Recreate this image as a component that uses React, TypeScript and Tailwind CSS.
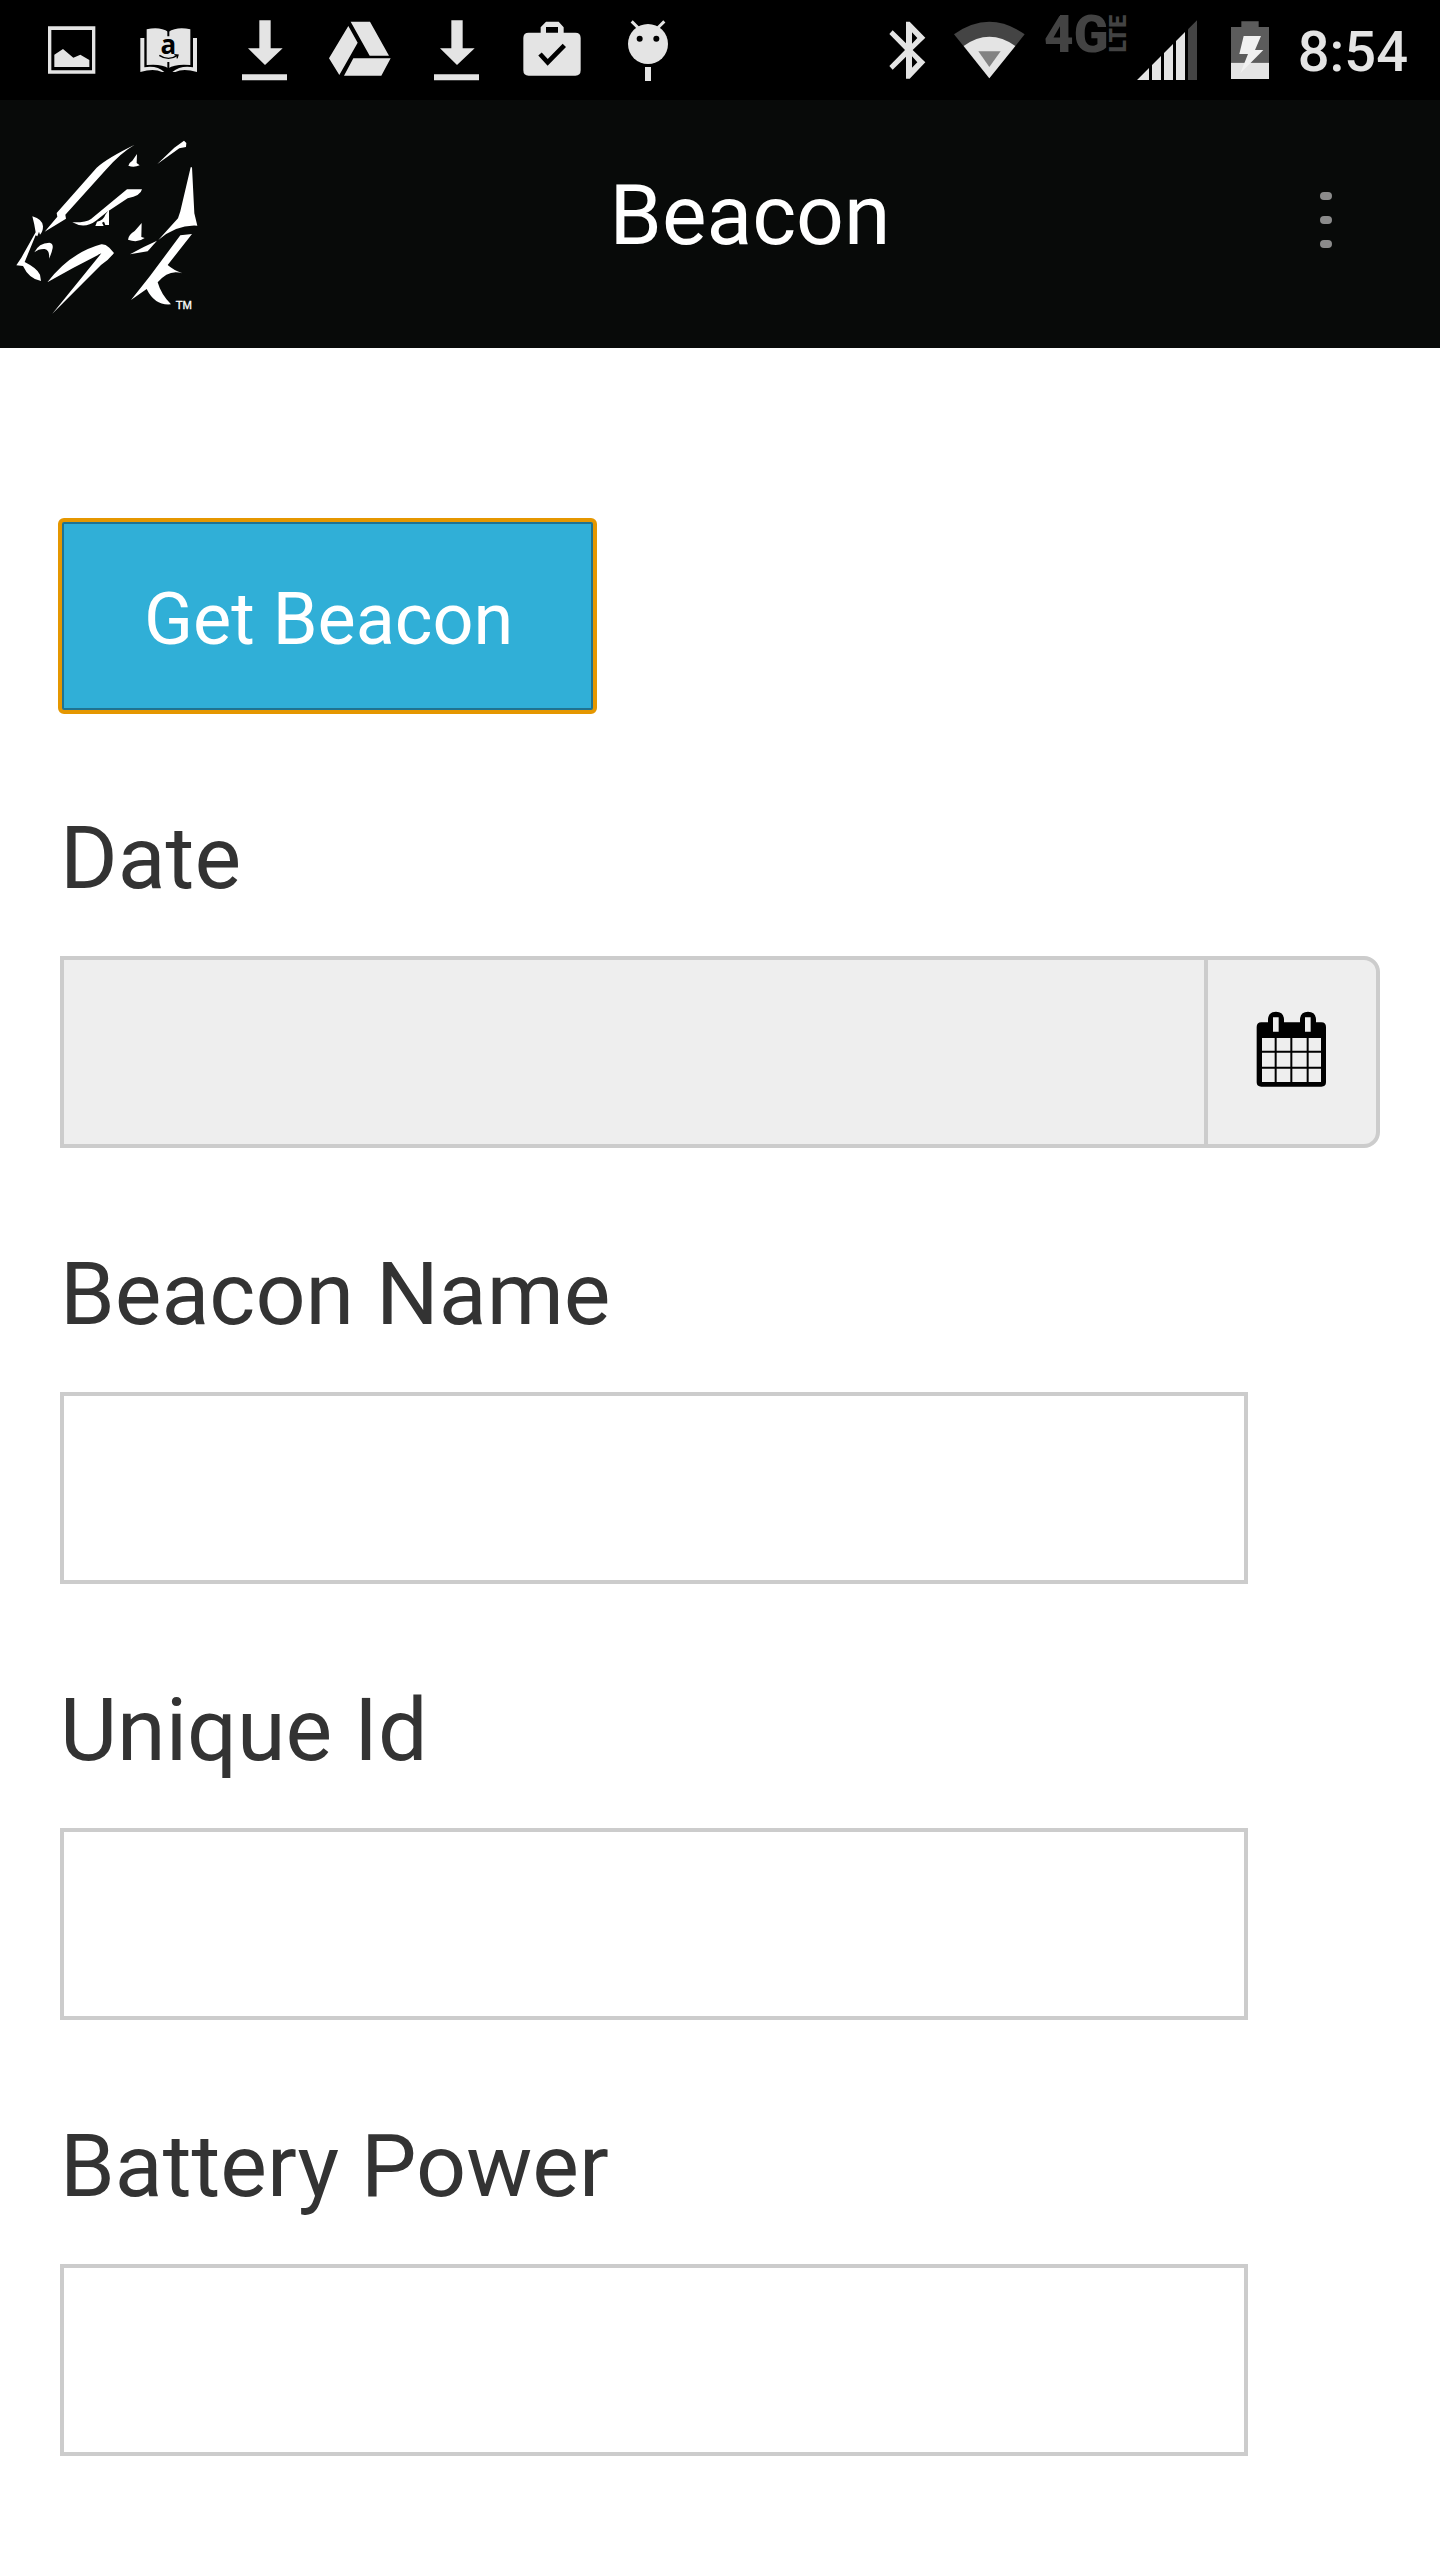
import React from "react";

type IconProps = { box: string; size: string; children: React.ReactNode };

const Glyph = ({ box, size, children }: IconProps) => (
  <svg viewBox={box} className={`${size} shrink-0`} fill="#e4e4e4" aria-hidden="true">
    {children}
  </svg>
);

const NOTE = "h-[100px] w-24";

const DownloadIcon = () => (
  <Glyph box="558 0 288 300" size={NOTE}>
    <path d="M688 61h34v84h36l-53 50-51-50h34zM636 223h135v18H636z" />
  </Glyph>
);

const NotificationIcons = () => (
  <div className="flex items-center">
    <Glyph box="-18 0 288 300" size={NOTE}>
      <path fillRule="evenodd" d="M54 79h142v142H54zM64 90v121h122V90z" />
      <path d="M73 201v-37l26-17 31 26 21-9 27 16v21z" />
    </Glyph>
    <Glyph box="270 0 288 300" size={NOTE}>
      <path d="M350 88q40-9 65 8 26-17 66-8v107q-46-4-66 10-19-14-65-10z" />
      <path d="M331 114h12v88q38-6 60 14h-7q-24-12-65 0zM501 114h-12v88q-38-6-62 14h9q24-12 65 0z" />
      <path d="M415 92v17M415 186v30" stroke="#000" strokeWidth="6" />
      <text x="415" y="161" textAnchor="middle" fill="#000" fontFamily="Open Sans, sans-serif" fontWeight="700" fontSize="78">
        a
      </text>
      <path d="M388 166q27 18 53 1M433 164l11 1-3 10" fill="none" stroke="#000" strokeWidth="4" />
    </Glyph>
    <DownloadIcon />
    <Glyph box="-144 0 288 300" size={NOTE}>
      <path d="M-35 78l28 50-55 97-31-50zM-28 65h58l57 102H29zM-20 175H92l-28 52H-48z" />
    </Glyph>
    <DownloadIcon />
    <Glyph box="432 0 288 300" size={NOTE}>
      <path
        fillRule="evenodd"
        d="M506 98h36V82l16-17h38l15 17v16h35q16 0 16 16v97q0 16-16 16H506q-16 0-16-16v-97q0-16 16-16zM558 81v17h36V81z"
      />
      <path d="M540 162l23 25 50-51" fill="none" stroke="#000" strokeWidth="14" />
    </Glyph>
    <Glyph box="720 0 288 300" size={NOTE}>
      <circle cx="864" cy="132" r="60" />
      <path d="M815 64l20 20M913 64l-20 20" stroke="#e4e4e4" strokeWidth="9" />
      <circle cx="839" cy="116" r="9" fill="#000" />
      <circle cx="889" cy="116" r="9" fill="#000" />
      <path d="M855 201h18v42h-18z" />
    </Glyph>
  </div>
);

const StatusBar = () => (
  <div className="flex h-[100px] items-center justify-between bg-black pr-8 pl-6">
    <NotificationIcons />
    <div className="flex items-center">
      <Glyph box="0 0 210 300" size="h-[100px] w-[70px]">
        <path
          fillRule="evenodd"
          d="M108 65h11l47 48-38 37 38 37-47 49h-11v-66l-40 39-10-11 47-48-47-48 10-11 40 39zM126 97v34l16-17zM126 169v34l16-16z"
        />
      </Glyph>
      <Glyph box="210 0 300 300" size="h-[100px] w-[100px]">
        <path d="M252 103q106-75 212 0L358 235z" fill="#444" />
        <path d="M281 138q77-55 155 0l-78 97z" />
        <path d="M325 154h67l-34 47z" fill="#828282" />
      </Glyph>
      <div className="flex h-[68px] w-[95px] items-center justify-center self-start font-black text-[#434343]">
        <span className="text-[51px] leading-none">4G</span>
        <span className="rotate-180 text-[23px] leading-[22px] [writing-mode:vertical-rl]">LTE</span>
      </div>
      <Glyph box="45 0 195 300" size="h-[100px] w-[65px]">
        <path d="M51 240l36-36v36zM96 240v-45l27-27v72zM132 240v-81l27-27v108zM168 240V123l27-27v144z" />
        <path d="M204 240V88l27-27v179z" fill="#444" />
      </Glyph>
      <Glyph box="240 0 294 300" size="h-[100px] w-[98px]">
        <path d="M333 81h31V64h52v17h31v107H333z" fill="#5c5c5c" />
        <path d="M333 188h114v49H333z" />
        <path d="M371 108h52l-18 42h25l-69 70 23-58h-26z" fill="#f1f1f1" />
      </Glyph>
      <time className="pt-1 text-[56px] leading-[66px] font-medium text-[#e4e4e4]">8:54</time>
    </div>
  </div>
);

const Logo = () => (
  <svg viewBox="0 0 660 630" className="h-[210px] w-[220px]" fill="#fff" role="img" aria-label="Team logo">
    <path d="M404 74Q362 98 315 152L196 284 198 296 134 335 172 290 170 279 290 143Q320 115 404 74z" />
    <path d="M411 102l-1 27 9 7q-18 8-34 1 1-8 12-15z" />
    <path d="M552 62l7 7-1 12-20 4-66 47 51-49z" />
    <path d="M572 142h4l7 138 9 37q-62-4-117 43l59-65 7-21z" />
    <path d="M471 362l-28 32-53 9 41-22z" />
    <path d="M381 208h45q-4 20-43 27l-61 40-34 27q-34 26-71 5 42 1 56-10z" />
    <path d="M327 269v46h-11l-4-10-6 3 5 10h-25l5-13q20-5 25-21z" />
    <path d="M425 309l-1 42 10 3q-21 16-50 5 1-14 20-26z" />
    <path d="M97 289q31 9 32 30 0 16-9 25l-3-9-5 14-5-3-33 80q38 19 46 38l3 19q-36-6-54-45l-20-2 15-23 43-76q-4-26-10-48z" />
    <path d="M103 397Q116 369 148 368 160 370 158 384 155 400 147 416 150 390 134 387 116 386 103 397z" />
    <path d="M142 487Q210 398 304 373q12-1 24 10l14 16q-15 20-39 36L157 581l147-181Q220 442 142 487z" />
    <path d="M541 346l35-4-73 93q17 15 44 25-40-14-74 27 10 36 40 66-48 5-73-46l-47 33 57-72z" />
    <text x="527" y="567" fontFamily="Liberation Sans, sans-serif" fontSize="34" stroke="#fff" strokeWidth="1">
      TM
    </text>
  </svg>
);

const AppHeader = () => (
  <header className="grid h-[248px] grid-cols-[288px_1fr_228px] bg-[#080a09] text-white">
    <div className="pt-5">
      <Logo />
    </div>
    <h1 className="pt-[66px] text-center text-[84px] leading-[100px] font-normal">Beacon</h1>
    <button type="button" aria-label="More options" className="mt-16 flex h-28 flex-col items-center justify-center gap-4">
      <span className="h-2 w-3 rounded-full bg-[#8b8b8b]" />
      <span className="h-2 w-3 rounded-full bg-[#8b8b8b]" />
      <span className="h-2 w-3 rounded-full bg-[#8b8b8b]" />
    </button>
  </header>
);

const CalendarIcon = () => (
  <svg viewBox="228 240 216 252" className="h-[84px] w-[72px]" aria-hidden="true">
    <path
      fillRule="evenodd"
      d="M244 277h20v-10q2-22 24-22t24 22v10h48v-10q2-22 24-22t24 22v10h16q14 0 14 14v166q0 13-14 13H244q-14 0-14-13V291q0-14 14-14zM246 324v132h177V324z"
    />
    <path d="M287 324v132M334 324v132M383 324v132M246 365h177M246 413h177" stroke="#000" strokeWidth="6" />
    <path d="M279 262h17v43h-17zM375 262h17v43h-17z" fill="#eee" />
  </svg>
);

const LABEL = "mb-10 block text-[88px] leading-[116px] text-[#333]";

const TextField = ({ id, label }: { id: string; label: string }) => (
  <div>
    <label htmlFor={id} className={LABEL}>
      {label}
    </label>
    <input id={id} type="text" className="block h-48 w-[90%] border-4 border-[#ccc] bg-white px-8 text-[72px] text-[#333] outline-none" />
  </div>
);

export default function App() {
  return (
    <div className="min-h-screen bg-white font-[Roboto,sans-serif]">
      <StatusBar />
      <AppHeader />
      <main className="px-[60px] pt-[172px] pb-[104px]">
        <form className="flex flex-col gap-[88px]" onSubmit={(e) => e.preventDefault()}>
          <button
            type="button"
            className="self-start rounded-[4px] border-4 border-[#1f7391] bg-[#30afd7] pt-[52px] pr-[78px] pb-11 pl-20 text-[72px] leading-[88px] text-white outline-4 -outline-offset-2 outline-[#e59700]"
          >
            Get Beacon
          </button>
          <div>
            <label htmlFor="date" className={LABEL}>
              Date
            </label>
            <div className="flex h-48 overflow-hidden rounded-r-2xl border-4 border-[#ccc] bg-[#eee]">
              <input id="date" type="text" readOnly className="min-w-0 flex-1 px-8 text-[72px] text-[#333] outline-none" />
              <button type="button" aria-label="Choose date" className="flex w-[172px] items-center justify-center border-l-4 border-[#ccc]">
                <CalendarIcon />
              </button>
            </div>
          </div>
          <TextField id="beacon-name" label="Beacon Name" />
          <TextField id="unique-id" label="Unique Id" />
          <TextField id="battery-power" label="Battery Power" />
        </form>
      </main>
    </div>
  );
}
